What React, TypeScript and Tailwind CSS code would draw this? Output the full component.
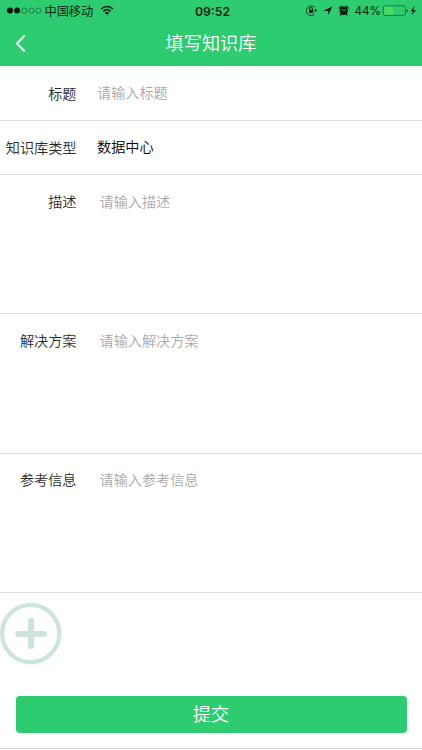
import React from "react";

function StatusBar() {
  return (
    <div className="flex h-[21px] items-center text-[12px] leading-[21px] text-[#06240f]">
      <svg className="ml-[7px] shrink-0" width="35" height="21" viewBox="0 0 35 21">
        <circle cx="3" cy="10.6" r="3" fill="#041a0b" />
        <circle cx="10.1" cy="10.6" r="3" fill="#041a0b" />
        {[17.2, 24.3, 31.4].map((x) => (
          <circle key={x} cx={x} cy="10.6" r="2.6" fill="none" stroke="#12622f" strokeWidth="0.7" />
        ))}
      </svg>
      <span className="ml-[2.5px] w-[49px] shrink-0 whitespace-nowrap pt-[2px] text-[12.2px]">中国移动</span>
      <svg className="ml-[6px] shrink-0" width="14" height="21" viewBox="0 0 14 21" fill="none" stroke="#041a0b" strokeWidth="1.7">
        <path d="M1.1 9C4.6 5.7 9.4 5.7 12.9 9" />
        <path d="M3.4 11.3c2.3-2 4.9-2 7.2 0" />
        <path d="M4.8 12.7L7 14.9l2.2-2.2c-1.3-1.1-3.1-1.1-4.4 0z" fill="#041a0b" stroke="none" />
      </svg>
      <span className="ml-[81.5px] w-[37.5px] shrink-0 pt-px font-[Inter] text-[12.2px] font-semibold">09:52</span>
      <svg className="ml-[72px] shrink-0" width="13" height="21" viewBox="0 0 13 21" fill="none" stroke="#06240f">
        <path d="M9.6 7.4a4.8 4.8 0 1 0 0 6.6" strokeWidth="0.8" />
        <path d="M10.7 8.7v1.4" strokeWidth="0.8" />
        <path d="M9.1 10h3.2l-1.6 2z" fill="#06240f" stroke="none" />
        <path d="M4.7 10V8.9a1.4 1.4 0 0 1 2.8 0V10" strokeWidth="0.9" />
        <rect x="4" y="9.8" width="4.2" height="3.2" fill="#06240f" stroke="none" />
      </svg>
      <svg className="ml-[5px] shrink-0" width="10" height="21" viewBox="0 0 10 21">
        <path d="M.4 11L9.2 6.4 5.3 15.3V11z" fill="#041a0b" />
      </svg>
      <svg className="ml-[5px] shrink-0" width="12" height="21" viewBox="0 0 12 21">
        <circle cx="5.7" cy="10.8" r="4.2" fill="#041a0b" />
        <path d="M1.1 8.1L3.3 6.2M8.1 6.2l2.2 1.9M3 14.2l-.7.9M8.4 14.2l.7.9" stroke="#041a0b" strokeWidth="1.2" strokeLinecap="round" />
        <path d="M3.7 9l2 1.8 2.1-1" fill="none" stroke="#2ecc71" strokeWidth="0.9" />
      </svg>
      <span className="ml-[5px] w-[25px] shrink-0 whitespace-nowrap pt-[2px] font-[Inter] text-[11.7px] tracking-[-0.1px]">44%</span>
      <svg className="ml-[2px] shrink-0" width="36" height="21" viewBox="0 0 36 21">
        <rect x="1.4" y="5.8" width="22" height="9.6" rx="1.8" fill="none" stroke="#126b34" strokeWidth="0.8" />
        <rect x="2.3" y="6.7" width="9.2" height="7.8" rx="0.8" fill="#4bdb60" />
        <path d="M24.6 9v3.4q1.3-.5 1.3-1.7T24.6 9z" fill="#0b4a22" />
        <path d="M32.5 6l-4 5.3h2.4l-1.4 4.2 4.5-5.6h-2.6z" fill="#041a0b" />
      </svg>
    </div>
  );
}

function Header() {
  return (
    <header className="h-[66px] bg-[#2ecc71]">
      <StatusBar />
      <div className="grid h-[43px] grid-cols-[60px_1fr_60px] items-center">
        <svg className="ml-[14px]" width="13" height="20" viewBox="0 0 13 20" fill="none" stroke="#fff" strokeWidth="2" strokeLinecap="round" strokeLinejoin="round">
          <path d="M10 3.3L3 10.5l7 7.2" strokeOpacity="0.9" />
        </svg>
        <h1 className="pb-px text-center text-[18.2px] font-[350] leading-[42px] text-white">填写知识库</h1>
      </div>
    </header>
  );
}

type FieldProps = {
  label: string;
  text: string;
  rowClass: string;
  textClass: string;
};

function Field({ label, text, rowClass, textClass }: FieldProps) {
  return (
    <div className={`flex border-b border-[#dfdfdf] text-[14.15px] leading-[20px] ${rowClass}`}>
      <span className="w-[76.5px] shrink-0 whitespace-nowrap text-right font-[350] text-[#2b2b2b]">{label}</span>
      <span className={textClass}>{text}</span>
    </div>
  );
}

export default function App() {
  return (
    <div className="flex h-[750px] w-[422px] flex-col overflow-hidden bg-white font-['Noto_Sans_CJK_SC',sans-serif]">
      <Header />
      <Field label="标题" text="请输入标题" rowClass="h-[55px] pt-[17px]" textClass="ml-[20.5px] -mt-px font-[350] text-[#a9a9a9]" />
      <Field label="知识库类型" text="数据中心" rowClass="h-[54px] pt-[16px]" textClass="ml-[20.5px] -mt-px font-[350] text-black" />
      <Field label="描述" text="请输入描述" rowClass="h-[139px] pt-[16px]" textClass="ml-[23px] font-[350] text-[#a9a9a9]" />
      <Field label="解决方案" text="请输入解决方案" rowClass="h-[140px] pt-[16px]" textClass="ml-[23px] font-[350] text-[#a9a9a9]" />
      <Field label="参考信息" text="请输入参考信息" rowClass="h-[139px] pt-[15px]" textClass="ml-[23px] font-[350] text-[#a9a9a9]" />
      <div className="flex h-[156px] shrink-0 flex-col border-b border-[#d4d4d4]">
        <svg className="mt-[10px]" width="62" height="62" viewBox="0 0 62 62" fill="none" stroke="#cde4db">
          <circle cx="30.7" cy="30.5" r="28.6" strokeWidth="4.2" />
          <path d="M31 18v25M18.3 31H44" strokeWidth="6" strokeLinecap="round" />
        </svg>
        <button className="mx-[15.5px] mt-[31px] h-[37px] rounded-[4px] bg-[#2ecc71] pb-[3px] text-[18.2px] font-[350] leading-[34px] text-white">提交</button>
      </div>
    </div>
  );
}
